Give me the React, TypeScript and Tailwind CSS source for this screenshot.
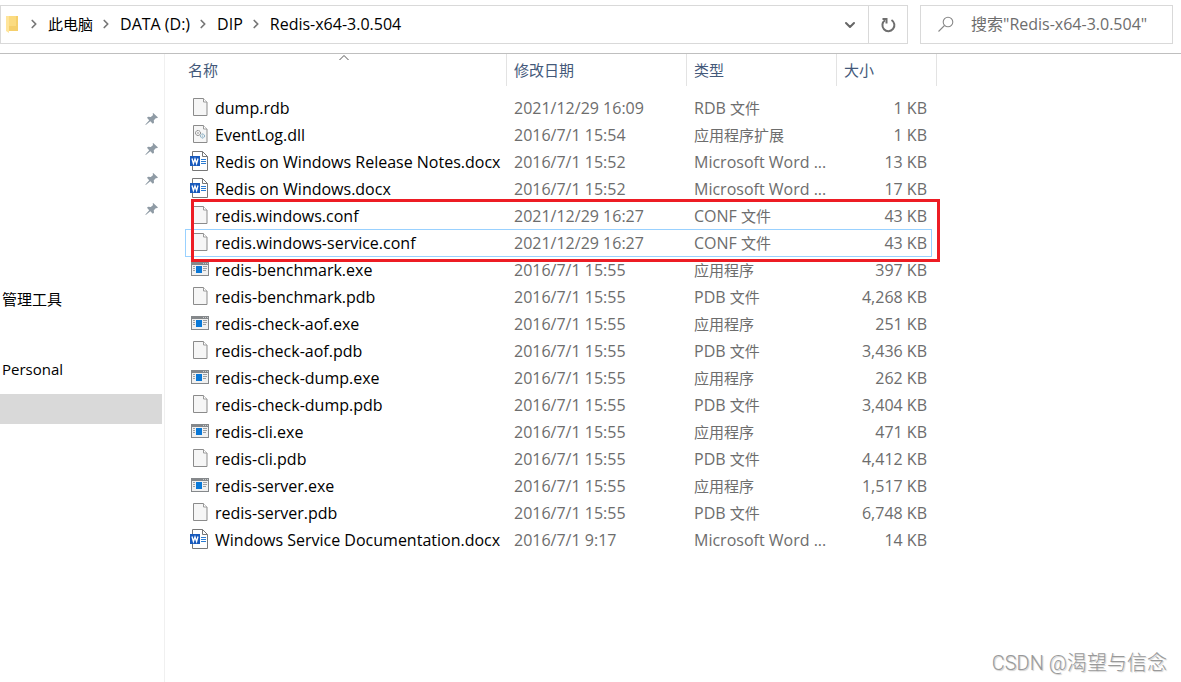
import { ChevronDown, ChevronRight } from 'lucide-react';
import { Fragment } from 'react';

type FileKind = 'blank' | 'dll' | 'word' | 'exe';

interface FileEntry {
  name: string;
  modified: string;
  type: string;
  size: string;
  kind: FileKind;
  focused?: boolean;
}

const WORD = 'Microsoft Word ...';

const files: FileEntry[] = [
  { name: 'dump.rdb', modified: '2021/12/29 16:09', type: 'RDB 文件', size: '1 KB', kind: 'blank' },
  { name: 'EventLog.dll', modified: '2016/7/1 15:54', type: '应用程序扩展', size: '1 KB', kind: 'dll' },
  { name: 'Redis on Windows Release Notes.docx', modified: '2016/7/1 15:52', type: WORD, size: '13 KB', kind: 'word' },
  { name: 'Redis on Windows.docx', modified: '2016/7/1 15:52', type: WORD, size: '17 KB', kind: 'word' },
  { name: 'redis.windows.conf', modified: '2021/12/29 16:27', type: 'CONF 文件', size: '43 KB', kind: 'blank' },
  { name: 'redis.windows-service.conf', modified: '2021/12/29 16:27', type: 'CONF 文件', size: '43 KB', kind: 'blank', focused: true },
  { name: 'redis-benchmark.exe', modified: '2016/7/1 15:55', type: '应用程序', size: '397 KB', kind: 'exe' },
  { name: 'redis-benchmark.pdb', modified: '2016/7/1 15:55', type: 'PDB 文件', size: '4,268 KB', kind: 'blank' },
  { name: 'redis-check-aof.exe', modified: '2016/7/1 15:55', type: '应用程序', size: '251 KB', kind: 'exe' },
  { name: 'redis-check-aof.pdb', modified: '2016/7/1 15:55', type: 'PDB 文件', size: '3,436 KB', kind: 'blank' },
  { name: 'redis-check-dump.exe', modified: '2016/7/1 15:55', type: '应用程序', size: '262 KB', kind: 'exe' },
  { name: 'redis-check-dump.pdb', modified: '2016/7/1 15:55', type: 'PDB 文件', size: '3,404 KB', kind: 'blank' },
  { name: 'redis-cli.exe', modified: '2016/7/1 15:55', type: '应用程序', size: '471 KB', kind: 'exe' },
  { name: 'redis-cli.pdb', modified: '2016/7/1 15:55', type: 'PDB 文件', size: '4,412 KB', kind: 'blank' },
  { name: 'redis-server.exe', modified: '2016/7/1 15:55', type: '应用程序', size: '1,517 KB', kind: 'exe' },
  { name: 'redis-server.pdb', modified: '2016/7/1 15:55', type: 'PDB 文件', size: '6,748 KB', kind: 'blank' },
  { name: 'Windows Service Documentation.docx', modified: '2016/7/1 9:17', type: WORD, size: '14 KB', kind: 'word' },
];

const crumbs = ['此电脑', 'DATA (D:)', 'DIP', 'Redis-x64-3.0.504'];

const columns = ['名称', '修改日期', '类型', '大小'];

// Latin text is one size larger than the Chinese next to it
function Label({ text }: { text: string }) {
  const latin = text.match(/^[ -~]*/)?.[0] ?? '';
  return (
    <>
      {latin}
      <span className="text-[15px]">{text.slice(latin.length)}</span>
    </>
  );
}

function FileIcon({ kind }: { kind: FileKind }) {
  if (kind === 'exe') {
    return (
      <svg className="h-5 w-5 shrink-0" viewBox="0 0 20 20">
        <path fill="#85888b" d="M1 3h18v14H1z" />
        <path fill="#c9cbcd" d="M13 4h1v1h-1zM15 4h1v1h-1zM17 4h1v1h-1z" />
        <path fill="#f0f0f0" d="M2 6h16v10H2z" />
        <path fill="#0a78d7" d="M6 7h6v7H6z" />
        <path
          stroke="#9da0a3"
          d="M3 7.5h2M3 9.5h2M3 11.5h2M13 7.5h4M13 9.5h4M13 11.5h3"
        />
      </svg>
    );
  }

  if (kind === 'word') {
    return (
      <svg className="h-5 w-5 shrink-0" viewBox="0 0 20 20">
        <path
          fill="#fff"
          stroke="#777"
          d="M2.5.5h10l5 5v14h-15zM12.5.5v5h5"
        />
        <path fill="#185abd" d="M0 5h10v10H0z" />
        <path
          fill="none"
          stroke="#fff"
          strokeWidth="1.3"
          d="M2 7.5l1.4 5L5 8l1.6 4.5L8 7.5"
        />
        <path stroke="#2b7cd3" d="M11 8.5h5M11 10.5h5M11 12.5h5" />
      </svg>
    );
  }

  return (
    <svg className="h-5 w-5 shrink-0" viewBox="0 0 20 20">
      <path
        fill="#f6f6f6"
        stroke="#8b8b8b"
        d="M3.5 1.5h10l3.5 3.5v13.5h-13.5z"
      />
      <path fill="#fff" stroke="#9a9a9a" d="M13.5 1.5v3.5h3.5" />
      {kind === 'dll' && (
        <g fill="none">
          <circle cx="8" cy="9" r="2.5" stroke="#777" strokeDasharray="1.5 .5" />
          <circle cx="8" cy="9" r="0.8" fill="#888" />
          <circle cx="12.5" cy="12" r="2" stroke="#6d9db8" strokeDasharray="1.5 .5" />
          <circle cx="12.5" cy="12" r="0.6" fill="#6d9db8" />
        </g>
      )}
    </svg>
  );
}

function PinIcon() {
  return (
    <svg className="h-3.5 w-3.5" viewBox="0 0 14 14" fill="#8f9ba5">
      <path d="M8.2 1L13 5.6l-1.3.6-.7-.3-2.2 2.3.2 2.6-1.2 1L5.3 9.3.8 13l-.4-.4 3.8-4.4L2 5.8l1.1-1 2.7.2L8.1 2.9 7.6 1.8z" />
    </svg>
  );
}

function AddressBar() {
  return (
    <div className="flex flex-1 border border-[#d9d9d9]">
      <nav className="flex flex-1 items-center pb-0.5" aria-label="路径">
        <svg className="ml-1 h-[18px] w-3.5" viewBox="0 0 14 18">
          <path fill="#f5cf6b" d="M3 1h10v15H3z" />
          <path fill="#ffe59b" d="M1 1h3v17l-3-2z" />
          <path fill="#fbdb80" d="M4 1h7v10H4z" />
        </svg>
        {crumbs.map((crumb, i) => (
          <Fragment key={crumb}>
            <ChevronRight
              className={
                i === 0
                  ? 'ml-2 mr-[7px] h-3.5 w-3.5 text-[#777]'
                  : 'ml-1.5 mr-[7px] h-3.5 w-3.5 text-[#777]'
              }
              strokeWidth={3}
            />
            <button type="button" className="text-black">
              <Label text={crumb} />
            </button>
          </Fragment>
        ))}
      </nav>
      <button
        type="button"
        aria-label="以前的位置"
        className="flex w-9 items-center justify-center text-[#666]"
      >
        <ChevronDown className="h-4 w-4" strokeWidth={3} />
      </button>
      <button
        type="button"
        aria-label="刷新"
        className="flex w-[39px] items-center justify-center border-l border-[#d9d9d9]"
      >
        <svg
          className="h-4 w-4"
          viewBox="0 0 16 16"
          fill="none"
          stroke="#6e6e6e"
          strokeWidth="2"
        >
          <path d="M11.5 3A6 6 0 1 1 5 3.2" />
          <path d="M2.500 1.900h4v4.500" />
        </svg>
      </button>
    </div>
  );
}

function SearchBox() {
  return (
    <label className="flex w-[253px] items-center border border-[#d9d9d9] pb-0.5 pl-4">
      <svg
        className="h-[18px] w-[18px] shrink-0"
        viewBox="0 0 18 18"
        fill="none"
        stroke="#888"
        strokeWidth="1.1"
      >
        <circle cx="11" cy="7" r="4.8" />
        <path d="M7.5 10.5L1.5 16.5" />
      </svg>
      <input
        type="text"
        aria-label="搜索"
        placeholder={'搜索"Redis-x64-3.0.504"'}
        className="ml-4 min-w-0 flex-1 outline-none placeholder:text-[#6d6d6d]"
      />
    </label>
  );
}

function Sidebar() {
  return (
    <aside className="w-[165px] shrink-0 border-r border-[#f0f0f0] pt-[50px] text-[15px]">
      {[0, 1, 2, 3].map((i) => (
        <div key={i} className="flex h-[30px] items-center justify-end pr-[5px]">
          <PinIcon />
        </div>
      ))}
      <div className="mt-[60px] h-[30px] pl-0.5 leading-[30px]">管理工具</div>
      <div className="mt-10 h-[30px] pl-0.5 leading-[30px]">Personal</div>
      <div className="mr-0.5 mt-2.5 h-[30px] bg-[#d9d9d9]" />
    </aside>
  );
}

function FileTable() {
  return (
    <div className="relative ml-5 w-[752px] shrink-0 self-start">
      <table className="w-full table-fixed border-collapse">
        <colgroup>
          <col className="w-[322px]" />
          <col className="w-[180px]" />
          <col className="w-[150px]" />
          <col className="w-[100px]" />
        </colgroup>
        <thead className="text-[15px]">
          <tr>
            {columns.map((column, i) => (
              <th key={column} className="relative h-[41px] p-0 align-top font-normal">
                <button
                  type="button"
                  className={
                    i === 0
                      ? 'block h-8 w-full border-r border-[#e3e3e3] pl-[3px] text-left leading-8 text-[#44597a]'
                      : 'block h-8 w-full border-r border-[#e3e3e3] pl-[7px] text-left leading-8 text-[#44597a]'
                  }
                >
                  {column}
                </button>
                {i === 0 && (
                  <svg
                    className="absolute right-[157px] top-0 h-2 w-3"
                    viewBox="0 0 12 8"
                    fill="none"
                    stroke="#555"
                  >
                    <path d="M1.500 6L6 1.500 10.500 6" />
                  </svg>
                )}
              </th>
            ))}
          </tr>
        </thead>
        <tbody className="text-[#6d6d6d]">
          {files.map((file) => (
            <tr
              key={file.name}
              className={
                file.focused
                  ? 'relative h-[27px] align-top after:absolute after:-top-px after:bottom-0 after:left-0 after:right-[5px] after:border after:border-[#99d1ff]'
                  : 'h-[27px] align-top'
              }
            >
              <td className="p-0">
                <div className="flex h-[27px] items-start gap-[5px] whitespace-nowrap pl-[5px] pt-0.5 leading-[22px] text-black">
                  <FileIcon kind={file.kind} />
                  {file.name}
                </div>
              </td>
              <td className="whitespace-nowrap p-0 pl-[7px] leading-[26px]">{file.modified}</td>
              <td className="whitespace-nowrap p-0 pl-[7px] leading-[26px]">
                <Label text={file.type} />
              </td>
              <td className="whitespace-nowrap p-0 pr-2.5 text-right leading-[26px]">{file.size}</td>
            </tr>
          ))}
        </tbody>
      </table>
      {/* red frame round the two conf files */}
      <div className="pointer-events-none absolute left-1.5 top-[145px] h-[63px] w-[749px] border-[3px] border-[#ed1c24]" />
    </div>
  );
}

export default function App() {
  return (
    <div className="relative flex min-h-screen flex-col bg-white font-['Open_Sans','Noto_Sans_CJK_SC',sans-serif] text-base text-black">
      <header className="flex h-[54px] gap-3 border-b border-[#bfbfbf] pb-[9px] pr-2 pt-[5px]">
        <AddressBar />
        <SearchBox />
      </header>
      <main className="flex flex-1">
        <Sidebar />
        <FileTable />
      </main>
      <div className="absolute bottom-1 right-3.5 font-['Roboto','Noto_Sans_CJK_SC',sans-serif] text-xl font-light leading-[30px] text-[#999] [text-shadow:1px_1px_1px_#ccc]">
        CSDN @渴望与信念
      </div>
    </div>
  );
}
